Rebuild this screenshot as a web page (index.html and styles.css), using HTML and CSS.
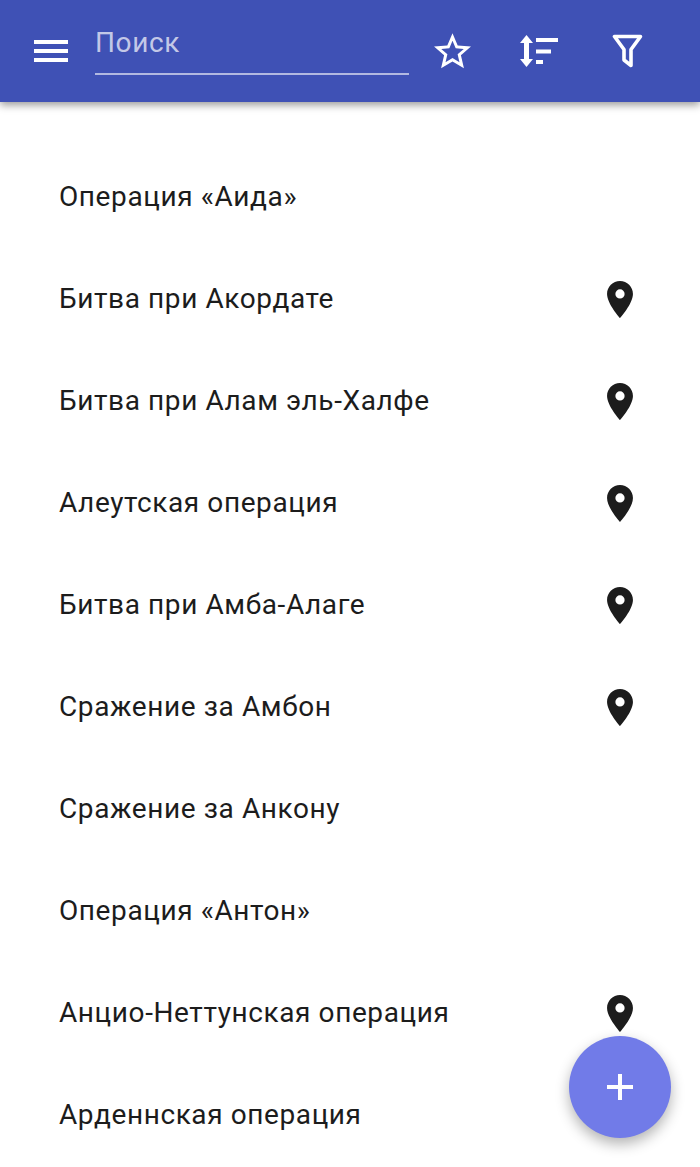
FILE: index.html
```html
<!DOCTYPE html>
<html lang="ru">
<head>
  <meta charset="UTF-8" />
  <meta name="viewport" content="width=device-width, initial-scale=1" />
  <title>Сражения</title>
  <link rel="stylesheet" href="styles.css">
</head>

<body>

  <!-- Toolbar -->
  <header class="toolbar">
    <button class="menu-btn" aria-label="Меню">
      <span class="menu-bar"></span>
      <span class="menu-bar"></span>
      <span class="menu-bar"></span>
    </button>
    <div class="search">Поиск</div>
    <div class="actions">
      <svg class="star-icon" viewBox="2 2 20 19.3" aria-label="Избранное">
        <path d="M22 9.24l-7.19-.62L12 2 9.19 8.63 2 9.24l5.46 4.73L5.82 21 12 17.27 18.18 21l-1.63-7.03L22 9.24zM12 15.4l-3.76 2.27 1-4.28-3.32-2.88 4.38-.38L12 6.1l1.71 4.04 4.38.38-3.32 2.88 1 4.28L12 15.4z"/>
      </svg>
      <svg class="sort-icon" viewBox="0 0 39 32" aria-label="Сортировка">
        <path d="M6.5 0l6.5 8H9v16h4l-6.5 8L0 24h4V8H0z"/>
        <path d="M16 3h22v4H16zM16 14.5h15v4H16zM16 25h7v4h-7z"/>
      </svg>
      <svg class="filter-icon" viewBox="0 0 31 34" aria-label="Фильтр">
        <path d="M2.5 2.5h26L19 15.5v16L12 26V15.5z" fill="none" stroke="#fff" stroke-width="3.6" stroke-linejoin="round"/>
      </svg>
    </div>
  </header>

  <!-- Battles -->
  <ul class="list">
    <li class="row">Операция «Аида»</li>
    <li class="row">Битва при Акордате <svg class="pin" viewBox="5 2 14 20"><use href="#pin-shape"/></svg></li>
    <li class="row">Битва при Алам эль-Халфе <svg class="pin" viewBox="5 2 14 20"><use href="#pin-shape"/></svg></li>
    <li class="row">Алеутская операция <svg class="pin" viewBox="5 2 14 20"><use href="#pin-shape"/></svg></li>
    <li class="row">Битва при Амба-Алаге <svg class="pin" viewBox="5 2 14 20"><use href="#pin-shape"/></svg></li>
    <li class="row">Сражение за Амбон <svg class="pin" viewBox="5 2 14 20"><use href="#pin-shape"/></svg></li>
    <li class="row">Сражение за Анкону</li>
    <li class="row">Операция «Антон»</li>
    <li class="row">Анцио-Неттунская операция <svg class="pin" viewBox="5 2 14 20"><use href="#pin-shape"/></svg></li>
    <li class="row">Арденнская операция</li>
  </ul>

  <button class="fab" aria-label="Добавить">
    <span class="fab-plus"></span>
  </button>

  <svg class="defs" aria-hidden="true">
    <defs>
      <path id="pin-shape" fill-rule="evenodd" d="M12 2C8.13 2 5 5.13 5 9c0 5.25 7 13 7 13s7-7.75 7-13c0-3.87-3.13-7-7-7zm0 9.5a2.5 2.5 0 1 1 0-5 2.5 2.5 0 0 1 0 5z"/>
    </defs>
  </svg>

</body>
</html>
```

FILE: styles.css
```css
html, body {
  height: 100%;
}

body {
  margin: 0;
  font-family: Roboto, sans-serif;
  background-color: #fff;
  color: #1c1c1c;
  overflow: hidden;
}

.toolbar {
  display: flex;
  align-items: flex-start;
  height: 102px;
  padding-left: 34px;
  box-sizing: border-box;
  background-color: #3f51b5;
  box-shadow: 0 3px 8px rgba(0, 0, 0, 0.4);
}

.menu-btn {
  display: flex;
  flex-direction: column;
  gap: 5px;
  width: 34px;
  margin-top: 40px;
  padding: 0;
  border: none;
  background: none;
}

.menu-bar {
  display: block;
  height: 4px;
  background-color: #fff;
}

.search {
  width: 314px;
  height: 47px;
  margin: 26px 0 0 27px;
  border-bottom: 2px solid rgba(255, 255, 255, 0.6);
  font-size: 28px;
  letter-spacing: 0.6px;
  line-height: 34px;
  color: rgba(255, 255, 255, 0.7);
}

.actions {
  display: flex;
  align-items: flex-start;
  margin-left: 25px;
}

.star-icon {
  width: 37px;
  height: 36px;
  margin-top: 33px;
  fill: #fff;
}

.sort-icon {
  width: 39px;
  height: 32px;
  margin: 35px 0 0 49px;
  fill: #fff;
}

.filter-icon {
  width: 31px;
  height: 34px;
  margin: 34px 0 0 53px;
}

.list {
  margin: 43px 0 0;
  padding: 0;
  list-style: none;
}

.row {
  display: flex;
  justify-content: space-between;
  align-items: center;
  height: 102px;
  padding: 0 67px 0 59px;
  font-size: 28px;
  letter-spacing: 0.6px;
}

.pin {
  width: 26px;
  height: 37px;
  margin-top: 2px;
  fill: #1c1c1c;
}

.fab {
  position: fixed;
  right: 29px;
  bottom: 29px;
  display: flex;
  justify-content: center;
  align-items: center;
  width: 102px;
  height: 102px;
  padding: 0;
  border: none;
  border-radius: 50%;
  background-color: #717be8;
  box-shadow: 0 6px 14px rgba(0, 0, 0, 0.3);
}

.fab-plus {
  position: relative;
  display: block;
  width: 26px;
  height: 4px;
  background-color: #fff;
}

.fab-plus::after {
  content: "";
  position: absolute;
  left: 11px;
  top: -11px;
  width: 4px;
  height: 26px;
  background-color: #fff;
}

.defs {
  position: absolute;
  width: 0;
  height: 0;
}
```
